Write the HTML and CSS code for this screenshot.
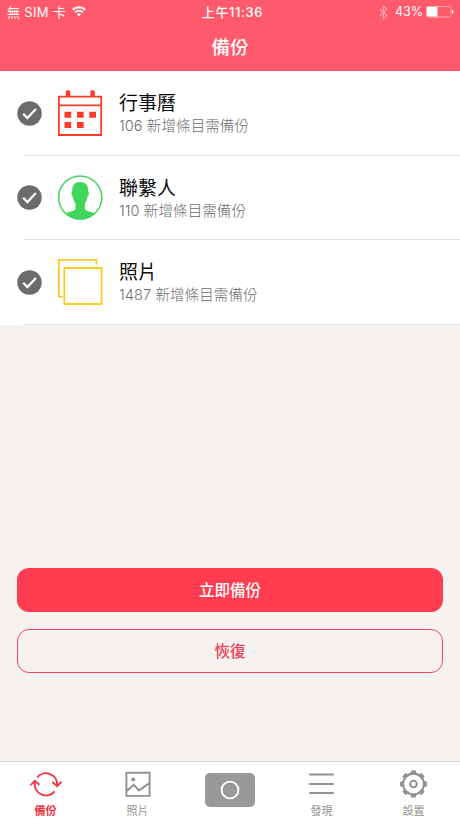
FILE: index.html
```html
<!DOCTYPE html>
<html lang="zh-Hant">
<head>
<meta charset="utf-8">
<title>備份</title>
<link rel="stylesheet" href="styles.css">
</head>
<body>
<div class="app">
  <header class="header">
    <div class="status">
      <div class="status-left">
        <span class="carrier">無 SIM 卡</span>
        <svg class="wifi" width="14" height="11" viewBox="0 0 14 11" fill="none" stroke="#fff" stroke-width="1.9"><path d="M.7 3.8a9 9 0 0 1 12.6 0M3 6.3a5.8 5.8 0 0 1 8 0"/><path d="M4.9 8.2a3 3 0 0 1 4.2 0L7 10.5z" fill="#fff" stroke="none"/></svg>
      </div>
      <div class="clock">上午11:36</div>
      <div class="status-right">
        <svg class="bluetooth" width="9" height="15" viewBox="0 0 9 15" fill="none" stroke="#ffa3ac" stroke-width="1.2"><path d="M.8 4l7 6.6-3.4 3.2V1.2l3.4 3.2-7 6.6"/></svg>
        <span class="percent">43%</span>
        <svg width="28" height="12" viewBox="0 0 28 12"><rect x=".5" y=".5" width="24.5" height="10.5" rx="1.7" fill="none" stroke="#ffadb5"/><path d="M1 1h10.5v9.5H1z" fill="#fff"/><path d="M26 3.8c2 .6 2 3.3 0 3.9z" fill="#fff"/></svg>
      </div>
    </div>
    <h1>備份</h1>
  </header>

  <main class="content">
    <ul class="list">
      <li class="row">
        <svg class="check" width="25" height="25" viewBox="0 0 25 25"><circle cx="12.5" cy="12.5" r="12.2" fill="#6b6b6e"/><path d="M6.2 12.8l4.2 4.2 8.5-9" fill="none" stroke="#fff" stroke-width="2.3"/></svg>
        <svg class="kind" width="46" height="46" viewBox="0 0 46 46" fill="#fa3c28"><path d="M8.8.6h4.4v5.5H8.8zM33.4.6h4.4v5.500h-4.400z"/><path d="M1.900 6.600h42.300v38.400H1.900zM2 15.300h42" fill="none" stroke="#fa3c28" stroke-width="1.800"/><path d="M7.500 21.800h6.700v6H7.500zM20 21.800h6.700v6H20zM32.300 21.800H39v6h-6.700zM7.500 32h6.700v6H7.500zM20 32h6.700v6H20z"/></svg>
        <div class="text"><div class="title">行事曆</div><div class="detail">106 新增條目需備份</div></div>
      </li>
      <li class="row">
        <svg class="check" width="25" height="25" viewBox="0 0 25 25"><circle cx="12.5" cy="12.5" r="12.2" fill="#6b6b6e"/><path d="M6.2 12.8l4.2 4.2 8.5-9" fill="none" stroke="#fff" stroke-width="2.3"/></svg>
        <svg class="kind" width="46" height="46" viewBox="0 0 46 46"><circle cx="23.2" cy="22.500" r="21.600" fill="#fff" stroke="#40d65c" stroke-width="1.500"/><path d="M23.200 7c5.600 0 8.300 3.600 7.900 9.500 1.300.3.800 4.800-.6 5.300-.4 3-1.200 5-2.600 6.600v5.300c.5 2.600 6 2.600 10.300 4.700A21.600 21.600 0 0 1 8.200 38.400c4.300-2.100 9.800-2.100 10.300-4.700v-5.300c-1.400-1.600-2.200-3.600-2.600-6.600-1.400-.5-1.900-5-.6-5.300C14.900 10.600 17.600 7 23.200 7z" fill="#40d65c"/></svg>
        <div class="text"><div class="title">聯繫人</div><div class="detail">110 新增條目需備份</div></div>
      </li>
      <li class="row">
        <svg class="check" width="25" height="25" viewBox="0 0 25 25"><circle cx="12.5" cy="12.5" r="12.2" fill="#6b6b6e"/><path d="M6.2 12.8l4.2 4.2 8.5-9" fill="none" stroke="#fff" stroke-width="2.3"/></svg>
        <svg class="kind" width="46" height="46" viewBox="0 0 46 46" fill="none" stroke="#f8cd20" stroke-width="1.800"><path d="M39.300 5.600V.9H1.800v36.800h3.900"/><path d="M7.300 9h37.200v36H7.300z"/></svg>
        <div class="text"><div class="title">照片</div><div class="detail">1487 新增條目需備份</div></div>
      </li>
    </ul>
    <div class="actions">
      <button class="button primary">立即備份</button>
      <button class="button outline">恢復</button>
    </div>
  </main>

  <nav class="tabs">
    <a class="tab active">
      <svg width="32" height="28" viewBox="0 0 32 28" fill="none" stroke="#ee374d" stroke-width="1.900"><path d="M7.300 7.300A11.300 11.300 0 0 1 27.200 15M22.300 12l4.900 4.200 4.300-4.600M24.700 21.300A11.300 11.300 0 0 1 4.800 12.200M.6 15.200l4.200-4.300 4.600 3.900"/></svg>
      <span>備份</span>
    </a>
    <a class="tab">
      <svg width="26" height="28" viewBox="0 0 26 28" fill="none" stroke="#929292" stroke-width="1.900"><path d="M1.400 2.700h23.200v23.200H1.400zM2 20.800l6.800-6 5.200 5.600 10-7"/><circle cx="8.200" cy="9.500" r="2" fill="#929292" stroke="none"/></svg>
      <span>照片</span>
    </a>
    <a class="tab">
      <svg class="camera" width="50" height="34" viewBox="0 0 50 34"><rect width="50" height="34" rx="5" fill="#999"/><circle cx="25" cy="17" r="8.400" fill="none" stroke="#fff" stroke-width="1.900"/></svg>
    </a>
    <a class="tab">
      <svg width="26" height="28" viewBox="0 0 26 28" stroke="#929292" stroke-width="1.800"><path d="M.2 4.500h24.500M.2 14h24.500M.2 23h24.500"/></svg>
      <span>發現</span>
    </a>
    <a class="tab">
      <svg width="28" height="28" viewBox="-13.500 -14 28 28" fill="none" stroke="#929292"><circle r="10.400" stroke-width="2.100"/><g fill="#929292" stroke="none"><path id="tooth" d="M-3-10.500l.7-2.900h4.600l.7 2.900z"/><use href="#tooth" transform="rotate(45)"/><use href="#tooth" transform="rotate(90)"/><use href="#tooth" transform="rotate(135)"/><use href="#tooth" transform="rotate(180)"/><use href="#tooth" transform="rotate(225)"/><use href="#tooth" transform="rotate(270)"/><use href="#tooth" transform="rotate(315)"/></g><circle r="3.300" stroke-width="2"/></svg>
      <span>設置</span>
    </a>
  </nav>
</div>
</body>
</html>
```
FILE: styles.css
```css
* { box-sizing: border-box; }
body {
  margin: 0;
  font-family: Inter, "Noto Sans CJK TC", sans-serif;
}
.app {
  width: 460px;
  height: 818px;
  display: flex;
  flex-direction: column;
  overflow: hidden;
  background: #f6f2ef;
}
.header {
  height: 71px;
  flex: none;
  background: #ff5a6b;
  color: #fff;
}
.status {
  height: 24px;
  padding: 0 6px 0 7px;
  display: grid;
  grid-template-columns: 1fr auto 1fr;
  align-items: center;
  font-size: 13px;
  line-height: 24px;
}
.status-left, .status-right { display: flex; align-items: center; }
.status-left { gap: 6px; }
.carrier { letter-spacing: .3px; }
.wifi { margin-top: -2px; }
.status-right { justify-content: flex-end; gap: 3px; }
.bluetooth { margin-right: 4px; }
.percent { font-size: 12.500px; }
.clock { font-weight: 500; letter-spacing: .6px; padding-left: 4px; }
.header h1 {
  margin: 0;
  font-size: 18.500px;
  line-height: 46px;
  font-weight: 500;
  text-align: center;
}
.content { flex: 1; display: flex; flex-direction: column; }
.list {
  margin: 0;
  padding: 0;
  list-style: none;
  background: #fff;
}
.row {
  height: 84.500px;
  display: flex;
  align-items: center;
  padding-left: 16.500px;
  background: linear-gradient(#e2e2e2, #e2e2e2) 23px 100% / 100% 1px no-repeat;
}
.kind { margin-left: 15px; }
.text { margin: 2px 0 0 16.500px; }
.title {
  font-size: 19px;
  line-height: 23px;
  color: #0c0c0c;
}
.detail {
  font-size: 14.500px;
  line-height: 21px;
  font-weight: 300;
  letter-spacing: .1px;
  color: #6c6c6c;
}
.actions {
  margin-top: auto;
  padding: 0 17px 88px;
  display: flex;
  flex-direction: column;
  gap: 17px;
}
.button {
  height: 44px;
  padding: 2px 0 0;
  border-radius: 12px;
  font: 500 15.500px/40px Inter, "Noto Sans CJK TC", sans-serif;
}
.primary { border: 0; background: #ff3c50; color: #fff; }
.outline { border: 1px solid #ee4b60; background: transparent; color: #ee4159; }
.tabs {
  height: 57px;
  flex: none;
  display: grid;
  grid-template-columns: repeat(5, 1fr);
  background: #fff;
  border-top: 1px solid #d9d7d5;
}
.tab {
  display: flex;
  flex-direction: column;
  align-items: center;
  padding-top: 8px;
  font-size: 11px;
  line-height: 16px;
  color: #929292;
}
.tab span { margin: 5px 1px 0 0; }
.tab.active { color: #f5303c; font-weight: 700; }
.camera { margin-top: 3px; }
```
